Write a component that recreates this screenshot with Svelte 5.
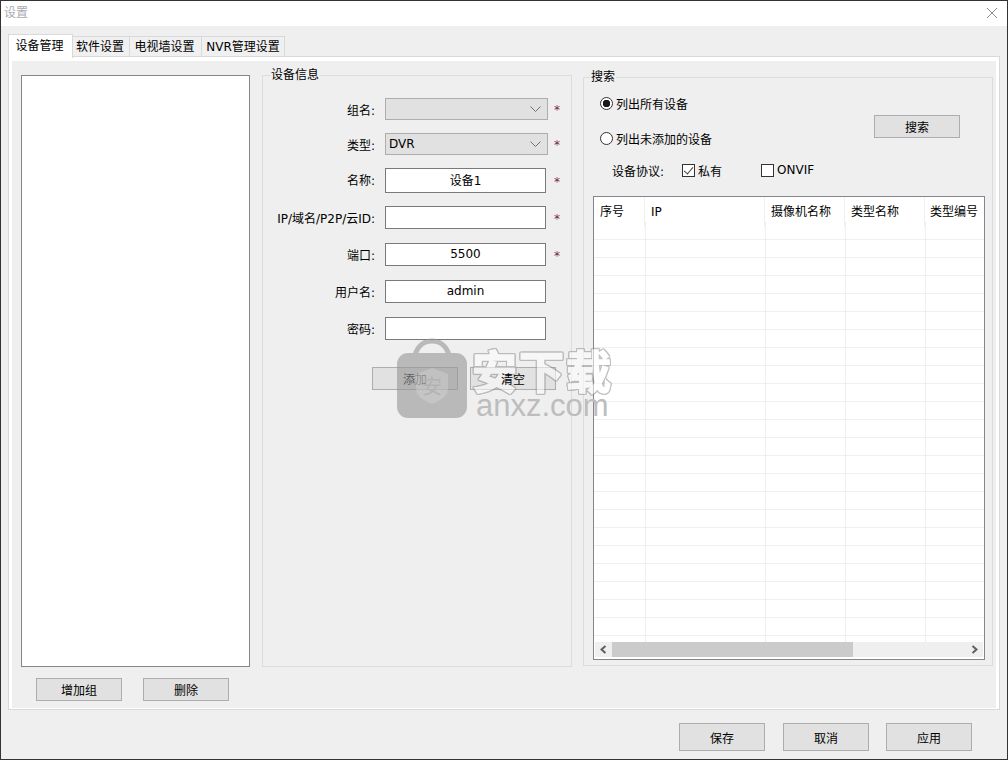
<script>
  const fields = [
    { label: '组名:', kind: 'select', value: '', star: true },
    { label: '类型:', kind: 'select', value: 'DVR', star: true },
    { label: '名称:', kind: 'tall', value: '设备1', star: true },
    { label: 'IP/域名/P2P/云ID:', kind: 'text', value: '', star: true },
    { label: '端口:', kind: 'text', value: '5500', star: true },
    { label: '用户名:', kind: 'text', value: 'admin', star: false },
    { label: '密码:', kind: 'text', value: '', star: false }
  ];
  const tabs = ['设备管理', '软件设置', '电视墙设置', 'NVR管理设置'];
  const columns = ['序号', 'IP', '摄像机名称', '类型名称', '类型编号'];
  const rows = Array.from({ length: 24 });
</script>

<div class="dialog">
  <header class="titlebar">
    <span class="title">设置</span>
    <svg class="close" width="12" height="12" viewBox="0 0 12 12">
      <path d="M1 1L11 11M11 1L1 11" stroke="#8c8c8c" stroke-width="1" fill="none" />
    </svg>
  </header>

  <nav class="tabs">
    {#each tabs as tab, i}
      <div class="tab" class:active={i === 0}>{tab}</div>
    {/each}
  </nav>

  <section class="panel">
    <div class="inner">
      <div class="left">
        <div class="listbox"></div>
        <div class="left-buttons">
          <button class="btn">增加组</button>
          <button class="btn">删除</button>
        </div>
      </div>

      <div class="group info">
        <span class="legend">设备信息</span>
        {#each fields as f}
          <div class="field {f.kind}">
            <label for={f.label}>{f.label}</label>
            <div class="control">
              {#if f.kind === 'select'}
                <div class="combo" id={f.label}>
                  <span>{f.value}</span>
                  <svg width="11" height="6" viewBox="0 0 11 6">
                    <path d="M0.5 0.5L5.5 5.5L10.5 0.5" stroke="#6f6f6f" fill="none" />
                  </svg>
                </div>
              {:else}
                <input id={f.label} type="text" value={f.value} />
              {/if}
            </div>
            {#if f.star}<span class="star">*</span>{/if}
          </div>
        {/each}
        <div class="info-buttons">
          <button class="btn">添加</button>
          <button class="btn"><span class="over">清空</span></button>
        </div>
      </div>

      <div class="group search">
        <span class="legend">搜索</span>
        <div class="search-top">
          <div class="options">
            <label class="opt"><input type="radio" name="scope" checked />列出所有设备</label>
            <label class="opt second"><input type="radio" name="scope" />列出未添加的设备</label>
            <div class="protocol">
              <span class="proto-label">设备协议:</span>
              <label class="opt check-a"><input type="checkbox" checked />私有</label>
              <label class="opt check-b"><input type="checkbox" />ONVIF</label>
            </div>
          </div>
          <button class="btn search-btn">搜索</button>
        </div>

        <div class="table">
          <div class="thead">
            {#each columns as c}
              <div class="th">{c}</div>
            {/each}
          </div>
          <div class="tbody">
            {#each rows as _}
              <div class="tr">
                {#each columns as c}
                  <div class="td"></div>
                {/each}
              </div>
            {/each}
          </div>
          <div class="scrollbar">
            <svg class="arrow" width="17" height="15" viewBox="0 0 17 15">
              <path d="M10.5 4L6.5 7.5L10.5 11" stroke="#606060" stroke-width="2" fill="none" />
            </svg>
            <div class="thumb"></div>
            <svg class="arrow end" width="17" height="15" viewBox="0 0 17 15">
              <path d="M6.5 4L10.5 7.5L6.5 11" stroke="#606060" stroke-width="2" fill="none" />
            </svg>
          </div>
        </div>
      </div>
    </div>
  </section>

  <footer class="footer">
    <button class="btn">保存</button>
    <button class="btn">取消</button>
    <button class="btn">应用</button>
  </footer>

  <div class="watermark">
    <svg class="lock" width="70" height="80" viewBox="0 0 70 80">
      <g opacity="0.6">
        <path d="M18 17C21 7 28 3 35 3C42 3 49 7 52 17" stroke="#969696" stroke-width="5" fill="none" />
        <rect x="0" y="15" width="70" height="65" rx="11" fill="#969696" />
      </g>
      <path d="M35 30L51 36V50C51 58 43 63 35 66C27 63 19 58 19 50V36Z" fill="rgba(215,215,215,.4)" />
      <text x="35" y="56" text-anchor="middle" class="lock-char">安</text>
    </svg>
    <div class="brand">
      <div class="brand-cn">安下载</div>
      <div class="brand-en">anxz.com</div>
    </div>
  </div>
</div>

<style>
  :global(body) {
    margin: 0;
    background: #efefef;
  }

  .dialog {
    position: relative;
    width: 1008px;
    height: 760px;
    box-sizing: border-box;
    border: 1px solid #333;
    background: #efefef;
    display: flex;
    flex-direction: column;
    font-family: "DejaVu Sans", "Noto Sans CJK SC", sans-serif;
    font-size: 12px;
    color: #000;
    overflow: hidden;
  }

  .titlebar {
    height: 25px;
    flex: none;
    background: #fff;
    display: flex;
    align-items: center;
    justify-content: space-between;
    padding: 0 9px 1px 3px;
    box-sizing: border-box;
  }

  .title {
    color: #a9aab0;
    margin-bottom: 3px;
  }

  .tabs {
    display: flex;
    align-items: flex-end;
    height: 31px;
    flex: none;
    padding-left: 7px;
    box-sizing: border-box;
    position: relative;
    z-index: 1;
    margin-bottom: -1px;
  }

  .tab {
    height: 21px;
    line-height: 21px;
    box-sizing: border-box;
    border: 1px solid #d9d9d9;
    border-left: none;
    background: #f0f0f0;
    padding-right: 2px;
    text-align: center;
    white-space: nowrap;
  }

  .tab.active {
    height: 24px;
    margin-bottom: -1px;
    line-height: 23px;
    background: #fff;
    border-left: 1px solid #d9d9d9;
    border-bottom: none;
    width: 65px;
  }

  .tab:nth-child(2) { width: 57px; }
  .tab:nth-child(3) { width: 72px; }
  .tab:nth-child(4) { width: 83px; padding-right: 0; }

  .panel {
    margin-left: 7px;
    width: 992px;
    height: 654px;
    flex: none;
    box-sizing: border-box;
    border: 1px solid #d9d9d9;
    background: #fff;
    padding: 4px 3px 1px 3px;
  }

  .inner {
    height: 100%;
    background: #efefef;
    box-sizing: border-box;
    padding: 14px 0 0 9px;
    display: flex;
    align-items: flex-start;
  }

  .left {
    width: 229px;
    flex: none;
  }

  .listbox {
    height: 592px;
    box-sizing: border-box;
    background: #fff;
    border: 1px solid #85858f;
  }

  .left-buttons {
    display: flex;
    gap: 21px;
    padding: 11px 0 0 15px;
  }

  .btn {
    width: 86px;
    height: 23px;
    box-sizing: border-box;
    padding: 0;
    background: #e1e1e1;
    border: 1px solid #adadad;
    font: inherit;
    color: inherit;
  }

  .over {
    position: relative;
    z-index: 2;
  }

  .group {
    position: relative;
    box-sizing: border-box;
    border: 1px solid #dcdcdc;
    flex: none;
  }

  .legend {
    position: absolute;
    top: -9px;
    left: 7px;
    padding: 0 1px;
    background: #efefef;
    line-height: 16px;
  }

  .search .legend {
    left: 6px;
  }

  .info {
    width: 310px;
    height: 592px;
    margin-left: 12px;
    padding-top: 22px;
  }

  .field {
    display: flex;
    align-items: center;
    height: 23px;
    margin-bottom: 14px;
  }

  .field.select {
    height: 22px;
    margin-bottom: 13px;
  }

  .field.tall {
    height: 25px;
    margin-bottom: 13px;
  }

  .field label {
    width: 112px;
    text-align: right;
    flex: none;
    white-space: nowrap;
  }

  .field.tall label {
    padding-bottom: 2px;
  }

  .control {
    width: 163px;
    margin-left: 10px;
    height: 100%;
    flex: none;
  }

  .combo {
    height: 100%;
    box-sizing: border-box;
    background: #e1e1e1;
    border: 1px solid #adadad;
    display: flex;
    align-items: center;
    justify-content: space-between;
    padding: 0 6px 0 3px;
  }

  .control input {
    display: block;
    width: 161px;
    height: 100%;
    box-sizing: border-box;
    border: 1px solid #7a7a7a;
    background: #fff;
    padding: 0 0 1px;
    text-align: center;
    font: inherit;
    color: inherit;
    outline: none;
  }

  .field.tall input {
    padding-bottom: 3px;
  }

  .star {
    margin-left: 6px;
    padding-top: 2px;
    color: #7d1f45;
    font-size: 12px;
  }

  .info-buttons {
    display: flex;
    gap: 12px;
    padding: 13px 0 0 109px;
  }

  .search {
    width: 410px;
    height: 589px;
    margin-left: 11px;
    margin-top: 2px;
    padding: 17px 7px 0 9px;
  }

  .search-top {
    display: flex;
    align-items: flex-start;
    height: 101px;
  }

  .options {
    width: 281px;
    flex: none;
    padding-left: 7px;
    box-sizing: border-box;
  }

  .opt {
    display: flex;
    align-items: center;
    height: 16px;
    white-space: nowrap;
  }

  .opt.second {
    margin-top: 19px;
  }

  .opt input {
    appearance: none;
    width: 13px;
    height: 13px;
    margin: 0 3px 0 0;
    box-sizing: border-box;
    border: 1px solid #333;
    background: #fff;
    flex: none;
    position: relative;
  }

  .opt input[type="radio"] {
    border-radius: 50%;
  }

  .opt input[type="radio"]:checked {
    background: radial-gradient(circle, #1a1a1a 0 3.5px, #fff 4px);
  }

  .opt input[type="checkbox"]:checked::after {
    content: "";
    position: absolute;
    left: 3px;
    top: 0;
    width: 4px;
    height: 8px;
    border: solid #444;
    border-width: 0 1px 1px 0;
    transform: rotate(40deg);
  }

  .protocol {
    display: flex;
    align-items: center;
    margin-top: 16px;
    padding-left: 12px;
    height: 16px;
  }

  .proto-label {
    width: 70px;
    flex: none;
  }

  .check-a {
    width: 79px;
    flex: none;
  }

  .search-btn {
    margin-top: 20px;
    flex: none;
  }

  .table {
    height: 464px;
    box-sizing: border-box;
    border: 1px solid #85858f;
    background: #fff;
    display: flex;
    flex-direction: column;
    overflow: hidden;
  }

  .thead {
    height: 25px;
    flex: none;
    display: grid;
    grid-template-columns: 51px 120px 80px 80px 80px;
  }

  .th {
    box-sizing: border-box;
    border-right: 1px solid #efefef;
    padding: 0 0 0 6px;
    line-height: 30px;
    white-space: nowrap;
  }

  .th:last-child {
    border-right: none;
    padding-left: 5px;
  }

  .tbody {
    height: 420px;
    flex: none;
    overflow: hidden;
  }

  .tr {
    height: 18px;
    box-sizing: border-box;
    border-bottom: 1px solid #efefef;
    display: grid;
    grid-template-columns: 52px 120px 80px 80px 80px;
  }

  .td {
    border-right: 1px solid #efefef;
  }

  .scrollbar {
    height: 15px;
    flex: none;
    margin: 0 1px;
    background: #efefef;
    display: flex;
    align-items: stretch;
  }

  .arrow {
    flex: none;
  }

  .arrow.end {
    margin-left: auto;
  }

  .thumb {
    width: 241px;
    background: #cbcbcb;
  }

  .footer {
    display: flex;
    gap: 18px;
    margin-left: 678px;
    padding-top: 13px;
  }

  .footer .btn {
    height: 28px;
  }

  .footer .btn:last-child {
    margin-left: -1px;
  }

  .watermark {
    position: absolute;
    left: 396px;
    top: 337px;
    display: flex;
    pointer-events: none;
  }

  .lock-char {
    font-family: "Noto Sans CJK SC", sans-serif;
    font-size: 20px;
    fill: #b3b3b3;
  }

  .brand {
    margin-left: 5px;
    padding-top: 10px;
  }

  .brand-cn {
    font-family: "Noto Sans CJK SC", sans-serif;
    font-weight: 700;
    font-size: 45px;
    line-height: 44px;
    letter-spacing: 2px;
    color: #fff;
    -webkit-text-stroke: 1.5px #fff;
    opacity: 0.55;
    filter: drop-shadow(1px 0 #909090) drop-shadow(-1px 0 #909090) drop-shadow(0 1px #909090) drop-shadow(0 -1px #909090);
    white-space: nowrap;
  }

  .brand-en {
    font-family: "Liberation Sans", sans-serif;
    font-size: 31px;
    line-height: 28px;
    color: #bdbdbd;
    margin-left: 4px;
  }
</style>
